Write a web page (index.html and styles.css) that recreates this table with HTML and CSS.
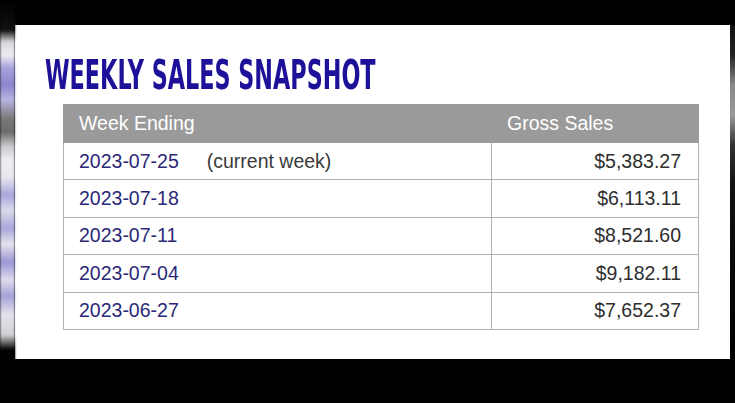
FILE: index.html
```html
<!DOCTYPE html>
<html lang="en">
<head>
<meta charset="utf-8">
<title>Weekly Sales Snapshot</title>
<link rel="stylesheet" href="styles.css">
</head>
<body>
<div class="frame">
  <div class="side side-left"></div>
  <main class="card">
    <h1 class="title"><span class="title-text">WEEKLY SALES SNAPSHOT</span></h1>
    <table class="sales">
      <thead>
        <tr><th class="col-week">Week Ending</th><th class="col-sales">Gross Sales</th></tr>
      </thead>
      <tbody>
        <tr><td class="date">2023-07-25<span class="note">(current week)</span></td><td class="amount">$5,383.27</td></tr>
        <tr><td class="date">2023-07-18</td><td class="amount">$6,113.11</td></tr>
        <tr><td class="date">2023-07-11</td><td class="amount">$8,521.60</td></tr>
        <tr><td class="date">2023-07-04</td><td class="amount">$9,182.11</td></tr>
        <tr><td class="date">2023-06-27</td><td class="amount">$7,652.37</td></tr>
      </tbody>
    </table>
  </main>
  <div class="side side-right"></div>
</div>
</body>
</html>
```
FILE: styles.css
```css
html, body {
  margin: 0;
  padding: 0;
  background: #000;
}
body {
  width: 735px;
  height: 403px;
  overflow: hidden;
  font-family: "Liberation Sans", Arial, sans-serif;
}
.frame {
  display: flex;
  padding-top: 25px;
  height: 334px;
}
.side {
  flex: none;
  height: 334px;
}
.side-left {
  width: 15px;
  margin-top: -25px;
  height: 370px;
  background: linear-gradient(to bottom,
    #000 0px, #111 30px, #d8d8dc 42px, #ececf0 55px,
    #a8a2dc 68px, #8d86d0 85px, #b8b4e0 100px,
    #7a7a7c 118px, #6c6c6e 132px, #c8c8cc 146px,
    #eeeef2 160px, #e6e6ee 178px, #a9a4dc 195px, #dcdcec 210px,
    #aaa6da 228px, #e4e4ee 244px, #9c96d4 262px, #dedcee 280px,
    #a7a2d8 296px, #e4e4ec 315px, #d0d0d4 335px, #000 350px);
  filter: blur(1px);
}
.side-right {
  width: 5px;
  background: linear-gradient(to bottom,
    #111 0px, #222 30px, #888 60px, #999 90px, #333 120px, #111 160px, #000 334px);
}
.card {
  flex: none;
  width: 715px;
  height: 334px;
  box-sizing: border-box;
  background: #fff;
  padding: 30px 0 0 30px;
}
.title {
  margin: 0;
  height: 40px;
  font-family: "DejaVu Sans Condensed", "DejaVu Sans", sans-serif;
  font-weight: bold;
  font-size: 40px;
  line-height: 40px;
  color: #1d1099;
  white-space: nowrap;
}
.title-text {
  display: inline-block;
  transform: scaleX(0.62);
  transform-origin: 0 50%;
}
.sales {
  margin: 9px 0 0 18px;
  width: 635px;
  border-collapse: collapse;
  font-size: 19.5px;
  table-layout: fixed;
}
.sales th {
  background: #9a9a9a;
  color: #fff;
  font-weight: normal;
  text-align: left;
  height: 38px;
  padding: 0 15px;
  box-sizing: border-box;
  border: 1px solid #9a9a9a;
}
.col-week { width: 428px; }
.col-sales { width: 207px; }
.sales td {
  height: 37.4px;
  padding: 0 15px;
  border: 1px solid #b2b2b2;
  box-sizing: border-box;
}
.date {
  color: #2b2878;
}
.note {
  color: #3a3a3a;
  margin-left: 28px;
}
.amount {
  text-align: right;
  color: #2e2e2e;
  padding-right: 17px !important;
}
```
